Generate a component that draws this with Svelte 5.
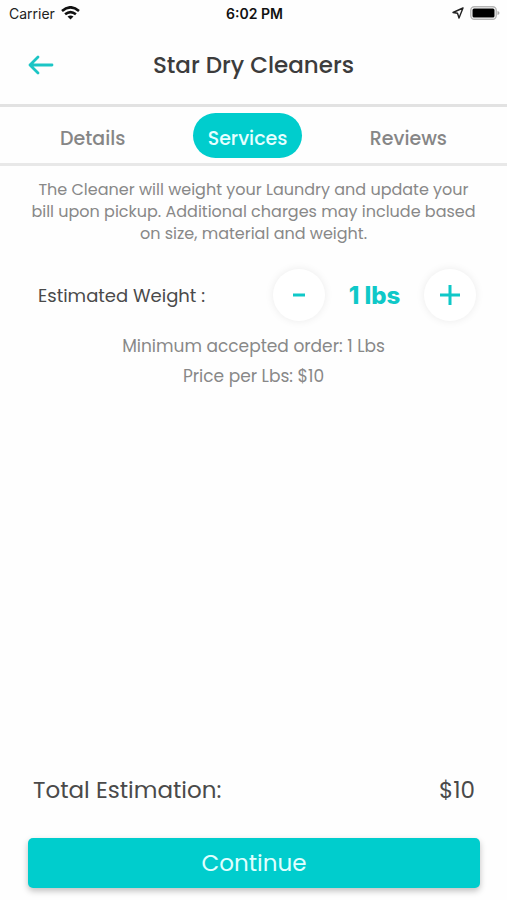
<script>
    const tabs = ['Details', 'Services', 'Reviews'];
    const pricePerLbs = 10;
    const minimum = 1;

    let active = 'Services';
    let weight = 1;

    $: total = weight * pricePerLbs;

    const decrease = () => {
        if (weight > minimum) weight -= 1;
    };

    const increase = () => {
        weight += 1;
    };
</script>

<style>
    :global(body) {
        margin: 0;
        background: #fefefe;
        font-family: Poppins, Inter, sans-serif;
    }

    button {
        padding: 0;
        border: none;
        background: none;
        font-family: inherit;
        cursor: pointer;
    }

    svg {
        display: block;
    }

    .screen {
        display: flex;
        flex-direction: column;
        min-height: 100vh;
        color: #4a4a4a;
    }

    .status {
        display: grid;
        grid-template-columns: 1fr auto 1fr;
        align-items: center;
        height: 26px;
        padding: 0 7px 0 9px;
        font-family: Inter, sans-serif;
        font-size: 14px;
        color: #222;
    }

    .status time {
        font-weight: 600;
        color: #111;
    }

    .carrier,
    .indicators {
        display: flex;
        align-items: center;
        gap: 6px;
    }

    .indicators {
        justify-content: flex-end;
    }

    header {
        display: grid;
        grid-template-columns: 26px 1fr 26px;
        align-items: center;
        height: 78px;
        padding: 0 28px;
        border-bottom: 3px solid #e2e2e2;
    }

    h1 {
        margin: 0;
        font-size: 23px;
        font-weight: 500;
        text-align: center;
        color: #3c3c3c;
    }

    nav {
        display: flex;
        justify-content: space-between;
        padding: 6px 45px 5px;
        border-bottom: 3px solid #e8e8e8;
    }

    .tab {
        height: 45px;
        padding: 6px 15px 0;
        border-radius: 23px;
        font-size: 19px;
        font-weight: 500;
        color: #868686;
    }

    .tab.active {
        background: #00cdcd;
        color: #e6ffff;
    }

    .description {
        margin: 0;
        padding: 13px 28px 0;
        font-size: 16px;
        line-height: 22px;
        text-align: center;
        color: #888;
    }

    .weight {
        display: flex;
        justify-content: space-between;
        align-items: center;
        padding: 24px 31px 10px 38px;
        font-size: 18px;
    }

    .stepper {
        display: flex;
        justify-content: space-between;
        align-items: center;
        width: 203px;
    }

    .round {
        display: flex;
        justify-content: center;
        align-items: center;
        width: 52px;
        height: 52px;
        border-radius: 50%;
        background: #fff;
        box-shadow: 0 0 8px rgba(0, 0, 0, 0.08);
    }

    output {
        font-family: Inter, sans-serif;
        font-size: 24px;
        font-weight: 800;
        color: #0fc8c8;
    }

    .note {
        margin: 0;
        font-size: 17px;
        line-height: 30px;
        text-align: center;
        color: #888;
    }

    footer {
        margin-top: auto;
        padding: 0 27px 12px 28px;
    }

    .total {
        display: flex;
        justify-content: space-between;
        padding: 0 5px 32px;
        font-size: 23px;
        line-height: 32px;
    }

    .continue {
        display: block;
        width: 100%;
        height: 50px;
        border-radius: 5px;
        background: #00cdcd;
        box-shadow: 0 3px 6px rgba(0, 0, 0, 0.25);
        font-size: 23px;
        color: #e0ffff;
    }
</style>

<div class="screen">
    <div class="status">
        <div class="carrier">
            <span>Carrier</span>
            <svg width="19" height="14" viewBox="0 0 19 14" fill="none" stroke="#111" stroke-width="2.6">
                <path d="M1 4.9Q9.500-2.300 18 4.900" />
                <path d="M4.100 8.300Q9.500 3.900 14.900 8.300" />
                <path d="M9.500 13.600L6.500 10.600Q9.500 8.300 12.500 10.600Z" fill="#111" stroke="none" />
            </svg>
        </div>
        <time>6:02 PM</time>
        <div class="indicators">
            <svg width="12" height="12" viewBox="0 0 12 12" fill="none" stroke="#222" stroke-width="1.4" stroke-linejoin="round">
                <path d="M11 1L1 5.500L5.500 6.300L7 11Z" />
            </svg>
            <svg width="30" height="14" viewBox="0 0 30 14">
                <rect x="0.800" y="0.800" width="25.400" height="12.400" rx="3.500" fill="#fff" stroke="#b5b5b5" stroke-width="1.400" />
                <rect x="2.500" y="2.500" width="22" height="9" rx="1.500" fill="#000" />
                <path d="M27.500 5V9Q29.500 8.500 29.500 7T27.500 5Z" fill="#aaa" />
            </svg>
        </div>
    </div>

    <header>
        <button aria-label="Back">
            <svg width="26" height="20" viewBox="0 0 26 20" fill="none" stroke="#1cc5c5" stroke-width="2.800" stroke-linecap="round" stroke-linejoin="round">
                <path d="M24 10H2M10 2L2 10L10 18" />
            </svg>
        </button>
        <h1>Star Dry Cleaners</h1>
    </header>

    <nav>
        {#each tabs as tab}
            <button class="tab" class:active={tab === active} on:click={() => (active = tab)}>{tab}</button>
        {/each}
    </nav>

    <p class="description">
        The Cleaner will weight your Laundry and update your bill upon pickup. Additional charges may include based on size, material and weight.
    </p>

    <div class="weight">
        <label for="weight">Estimated Weight :</label>
        <div class="stepper">
            <button class="round" aria-label="Decrease weight" on:click={decrease}>
                <svg width="20" height="20" viewBox="0 0 20 20" stroke="#0fc8c8" stroke-width="3">
                    <path d="M4 10H16" />
                </svg>
            </button>
            <output id="weight">{weight} lbs</output>
            <button class="round" aria-label="Increase weight" on:click={increase}>
                <svg width="20" height="20" viewBox="0 0 20 20" stroke="#0fc8c8" stroke-width="3">
                    <path d="M0 10H20M10 0V20" />
                </svg>
            </button>
        </div>
    </div>

    <p class="note">Minimum accepted order: {minimum} Lbs</p>
    <p class="note">Price per Lbs: ${pricePerLbs}</p>

    <footer>
        <div class="total">
            <span>Total Estimation:</span>
            <span>${total}</span>
        </div>
        <button class="continue">Continue</button>
    </footer>
</div>
